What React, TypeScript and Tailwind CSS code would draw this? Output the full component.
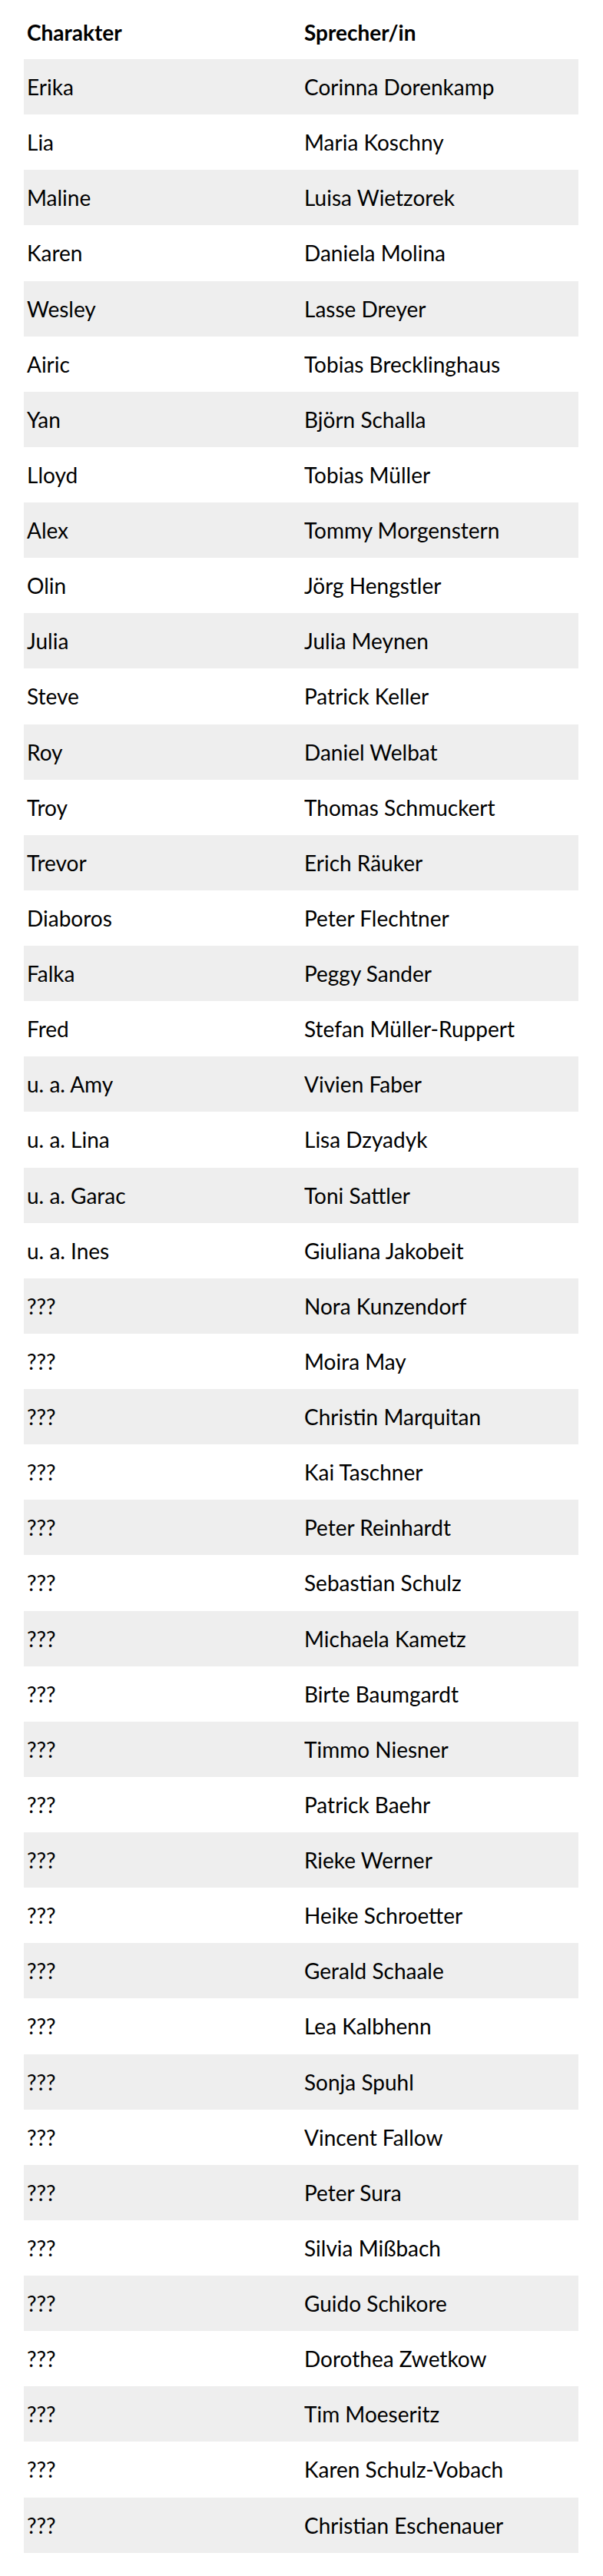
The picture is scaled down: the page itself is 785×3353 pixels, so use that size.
const rows: [string, string][] = [
  ["Erika", "Corinna Dorenkamp"],
  ["Lia", "Maria Koschny"],
  ["Maline", "Luisa Wietzorek"],
  ["Karen", "Daniela Molina"],
  ["Wesley", "Lasse Dreyer"],
  ["Airic", "Tobias Brecklinghaus"],
  ["Yan", "Björn Schalla"],
  ["Lloyd", "Tobias Müller"],
  ["Alex", "Tommy Morgenstern"],
  ["Olin", "Jörg Hengstler"],
  ["Julia", "Julia Meynen"],
  ["Steve", "Patrick Keller"],
  ["Roy", "Daniel Welbat"],
  ["Troy", "Thomas Schmuckert"],
  ["Trevor", "Erich Räuker"],
  ["Diaboros", "Peter Flechtner"],
  ["Falka", "Peggy Sander"],
  ["Fred", "Stefan Müller-Ruppert"],
  ["u. a. Amy", "Vivien Faber"],
  ["u. a. Lina", "Lisa Dzyadyk"],
  ["u. a. Garac", "Toni Sattler"],
  ["u. a. Ines", "Giuliana Jakobeit"],
  ["???", "Nora Kunzendorf"],
  ["???", "Moira May"],
  ["???", "Christin Marquitan"],
  ["???", "Kai Taschner"],
  ["???", "Peter Reinhardt"],
  ["???", "Sebastian Schulz"],
  ["???", "Michaela Kametz"],
  ["???", "Birte Baumgardt"],
  ["???", "Timmo Niesner"],
  ["???", "Patrick Baehr"],
  ["???", "Rieke Werner"],
  ["???", "Heike Schroetter"],
  ["???", "Gerald Schaale"],
  ["???", "Lea Kalbhenn"],
  ["???", "Sonja Spuhl"],
  ["???", "Vincent Fallow"],
  ["???", "Peter Sura"],
  ["???", "Silvia Mißbach"],
  ["???", "Guido Schikore"],
  ["???", "Dorothea Zwetkow"],
  ["???", "Tim Moeseritz"],
  ["???", "Karen Schulz-Vobach"],
  ["???", "Christian Eschenauer"],
];

export default function App() {
  return (
    <div className="bg-white pl-[31px] pr-[32px] pb-[30px] text-black font-['Lato',sans-serif] text-[28px]">
      <div className="grid grid-cols-2 h-[77px] pt-[6px] items-center font-bold">
        <div className="pl-1">Charakter</div>
        <div className="pl-1">Sprecher/in</div>
      </div>
      {rows.map(([character, speaker], i) => (
        <div
          key={speaker}
          className={`grid grid-cols-2 h-[72.13px] items-center ${i % 2 === 0 ? "bg-[#eeeeee]" : "bg-white"}`}
        >
          <div className="pl-1">{character}</div>
          <div className="pl-1">{speaker}</div>
        </div>
      ))}
    </div>
  );
}
